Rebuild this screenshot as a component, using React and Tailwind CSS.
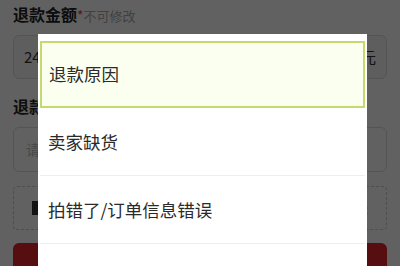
import React from 'react';

const reasons = ['卖家缺货', '拍错了/订单信息错误'];

export default function App() {
    return (
        <div
            className="relative h-[266px] w-[400px] overflow-hidden bg-white"
            style={{ fontFamily: '"Noto Sans CJK SC", "Noto Sans", sans-serif' }}
        >
            <div className="px-[13px] pt-[4px]">
                <div className="flex items-baseline leading-[20px]">
                    <span className="text-[16px] font-bold text-[#222]">退款金额</span>
                    <span className="text-[14px] text-[#e4393c]">*</span>
                    <span className="text-[13px] text-[#aaa]">不可修改</span>
                </div>
                <div className="mt-[9px] flex h-[44px] items-center justify-between rounded-[6px] border border-[#ddd] bg-[#f7f7f7] px-[10px] text-[15px] text-[#333]">
                    <span>24.00</span>
                    <span>元</span>
                </div>
                <div className="mt-[17px] text-[16px] font-bold leading-[20px] text-[#222]">退款原因</div>
                <div className="mt-[11px] flex h-[45px] items-center rounded-[6px] border border-[#ddd] px-[12px] text-[14px] text-[#bbb]">
                    请选择
                </div>
                <div className="mt-[14px] flex h-[44px] items-center justify-between rounded-[4px] border border-dashed border-[#ccc] px-[18px] text-[13px] text-[#999]">
                    <span className="h-[14px] w-[10px] bg-[#333]" />
                    <span>0/3 张</span>
                </div>
                <div className="mt-[13px] h-[44px] rounded-[6px] bg-[#e4262a]" />
            </div>

            <div className="absolute inset-0 bg-black/[0.62]" />

            <div className="absolute left-[38px] top-[34px] w-[329px] bg-white px-[2px] pt-[7px]">
                <div className="flex h-[67px] items-center border-2 border-[#c3db6e] bg-[#fafff0] pl-[7px] text-[17.5px] text-[#2a2a2a]">
                    退款原因
                </div>
                {reasons.map((r) => (
                    <div
                        key={r}
                        className="flex h-[68px] items-center border-b border-[#eee] pl-[8px] pt-[2px] text-[17.5px] text-[#2a2a2a]"
                    >
                        {r}
                    </div>
                ))}
                <div className="h-[68px]" />
            </div>
        </div>
    );
}
